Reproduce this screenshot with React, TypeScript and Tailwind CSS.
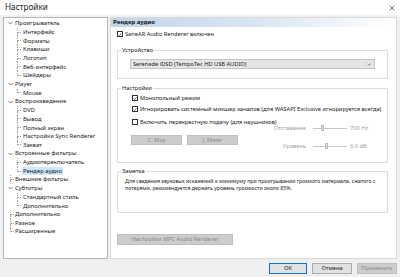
import type { ReactNode } from "react";

type Node = { label: string; children?: string[] };

const tree: Node[] = [
  { label: "Проигрыватель", children: ["Интерфейс", "Форматы", "Клавиши", "Логотип", "Веб-интерфейс", "Шейдеры"] },
  { label: "Player", children: ["Mouse"] },
  { label: "Воспроизведение", children: ["DVD", "Вывод", "Полный экран", "Настройки Sync Renderer", "Захват"] },
  { label: "Встроенные фильтры", children: ["Аудиопереключатель", "Рендер аудио"] },
  { label: "Внешние фильтры" },
  { label: "Субтитры", children: ["Стандартный стиль", "Дополнительно"] },
  { label: "Дополнительно" },
  { label: "Разное" },
  { label: "Расширенные" },
];

const font = { fontFamily: '"Noto Sans", "Open Sans", sans-serif' };

function Chevron() {
  return (
    <svg width="5" height="4" viewBox="0 0 5 4" className="shrink-0">
      <path d="M0.5 1 L2.5 3 L4.5 1" fill="none" stroke="#555" strokeWidth="0.8" />
    </svg>
  );
}

function Check({ checked }: { checked?: boolean }) {
  return (
    <span className="w-[6px] h-[6px] border border-[#333] bg-white flex items-center justify-center shrink-0">
      {checked && (
        <svg width="5" height="5" viewBox="0 0 5 5">
          <path d="M0.6 2.5 L2 3.9 L4.4 1" fill="none" stroke="#222" strokeWidth="0.8" />
        </svg>
      )}
    </span>
  );
}

function CheckRow({ checked, children, className = "" }: { checked?: boolean; children: ReactNode; className?: string }) {
  return (
    <div className={`h-[8px] flex items-center gap-[2px] ${className}`}>
      <Check checked={checked} />
      <span className="whitespace-nowrap">{children}</span>
    </div>
  );
}

function Group({ title, className = "", children }: { title: string; className?: string; children: ReactNode }) {
  return (
    <fieldset className={`border border-[#dcdcdc] rounded-[1px] w-[271px] ml-[6px] ${className}`}>
      <legend className="ml-[3px] px-[1px] h-[8px] leading-[8px]">{title}</legend>
      {children}
    </fieldset>
  );
}

function Slider({ label, value, pos }: { label: string; value: string; pos: number }) {
  return (
    <div className="h-[8px] flex items-center text-[#a0a0a0]">
      <span className="w-[36px] text-right whitespace-nowrap">{label}</span>
      <div className="relative w-[34px] h-[8px] ml-[7px] flex items-center">
        <div className="w-full h-[1px] bg-[#c8c8c8]" />
        <div className="absolute top-[1px] w-[3px] h-[6px] bg-[#dcdcdc] border border-[#bcbcbc]" style={{ left: pos }} />
      </div>
      <span className="ml-[3px] whitespace-nowrap">{value}</span>
    </div>
  );
}

export default function App() {
  return (
    <div className="w-[400px] h-[277px] bg-[#f0f0f0] flex flex-col overflow-hidden text-[5.7px] text-[#1a1a1a]" style={font}>
      {/* title bar */}
      <div className="h-[15px] bg-white flex items-center justify-between pl-[5px] pr-[5px] shrink-0">
        <span className="text-[8.2px] text-[#222]">Настройки</span>
        <svg width="6" height="6" viewBox="0 0 6 6">
          <path d="M0.5 0.5 L5.5 5.5 M5.5 0.5 L0.5 5.5" stroke="#333" strokeWidth="0.7" />
        </svg>
      </div>

      <div className="flex pl-[3px] pt-[2px] gap-[2px] h-[244px] shrink-0">
        {/* tree */}
        <div className="w-[105px] h-[242px] bg-white border border-[#b5b5b5] pt-[1px] text-[5.9px]">
          {tree.map((n, i) => {
            const lastRoot = i === tree.length - 1;
            return (
              <div key={i}>
                <div className="h-[8.7px] flex items-center">
                  {n.children ? (
                    <div className="w-[10px] pl-[3.5px] flex items-center">
                      <Chevron />
                    </div>
                  ) : (
                    <div className="w-[10px] h-full flex">
                      <div className="w-[6px]" />
                      <div className="flex flex-col w-[4px] h-full">
                        <div className="flex-1 border-l border-b border-dotted border-[#a0a0a0]" />
                        <div className={`flex-1 ${lastRoot ? "" : "border-l border-dotted border-[#a0a0a0]"}`} />
                      </div>
                    </div>
                  )}
                  <span className="ml-[1px] whitespace-nowrap">{n.label}</span>
                </div>
                {n.children?.map((c, j) => {
                  const last = j === n.children!.length - 1;
                  const sel = c === "Рендер аудио";
                  return (
                    <div key={j} className="h-[8.7px] flex items-center">
                      <div className="w-[13px]" />
                      <div className="flex flex-col w-[4px] h-full">
                        <div className="flex-1 border-l border-b border-dotted border-[#a0a0a0]" />
                        <div className={`flex-1 ${last ? "" : "border-l border-dotted border-[#a0a0a0]"}`} />
                      </div>
                      <span className={`ml-[1px] px-[1px] whitespace-nowrap leading-[8px] ${sel ? "bg-[#cce8ff]" : ""}`}>{c}</span>
                    </div>
                  );
                })}
              </div>
            );
          })}
        </div>

        {/* main panel */}
        <div className="w-[287px] h-[242px] bg-white border border-[#d9d9d9] flex flex-col">
          <div className="h-[9px] bg-gradient-to-r from-[#c2d5ea] via-[#d9e5f2] to-white flex items-center pl-[2px] font-bold text-[6px] text-[#111]">
            Рендер аудио
          </div>

          <CheckRow checked className="mt-[3px] ml-[6px]">SaneAR Audio Renderer включен</CheckRow>

          <Group title="Устройство" className="mt-[8px] h-[33px]">
            <div className="mt-[5px] ml-[12px] w-[245px] h-[10px] bg-[#e5e5e5] border border-[#c4c4c4] flex items-center justify-between pl-[2px] pr-[3px]">
              <span className="whitespace-nowrap">Serenade iDSD (TempoTec HD USB AUDIO)</span>
              <svg width="4" height="3" viewBox="0 0 4 3">
                <path d="M0.3 0.6 L2 2.3 L3.7 0.6" fill="none" stroke="#555" strokeWidth="0.6" />
              </svg>
            </div>
          </Group>

          <Group title="Настройки" className="mt-[5px] h-[79px]">
            <CheckRow checked className="mt-[2px] ml-[14px]">Монопольный режим</CheckRow>
            <CheckRow checked className="mt-[3px] ml-[14px]">
              Игнорировать системный микшер каналов (для WASAPI Exclusive игнорируется всегда)
            </CheckRow>
            <div className="flex mt-[5px]">
              <div className="w-[152px] flex flex-col">
                <CheckRow className="ml-[14px]">Включить перекрестную подачу (для наушников)</CheckRow>
                <div className="flex gap-[5px] ml-[13px] mt-[9px]">
                  <div className="w-[51px] h-[10px] bg-[#cccccc] border border-[#bfbfbf] flex items-center justify-center text-[#8a8a8a]">C. Moy</div>
                  <div className="w-[51px] h-[10px] bg-[#cccccc] border border-[#bfbfbf] flex items-center justify-center text-[#8a8a8a]">J. Meier</div>
                </div>
              </div>
              <div className="flex flex-col pt-[6px] gap-[10px]">
                <Slider label="Отставание" value="700 Hz" pos={8} />
                <Slider label="Уровень" value="6.0 dB" pos={12} />
              </div>
            </div>
          </Group>

          <Group title="Заметка" className="mt-[4px] h-[46px]">
            <p className="mt-[3px] ml-[7px] leading-[7.2px] text-[5.2px] whitespace-nowrap">
              Для сведения звуковых искажений к минимуму при проигрывании громкого материала, сжатого с
              <br />
              потерями, рекомендуется держать уровень громкости около 85%.
            </p>
          </Group>

          <div className="mt-[21px] ml-[6px] w-[116px] h-[11px] bg-[#cccccc] border border-[#bfbfbf] flex items-center justify-center text-[#8a8a8a]">
            Настройки MPC Audio Renderer
          </div>
        </div>
      </div>

      {/* bottom buttons */}
      <div className="flex-1 flex items-center justify-end pr-[3px] gap-[5px]">
        <div className="w-[38px] h-[11px] bg-[#e1e1e1] border border-[#0078d7] flex items-center justify-center">OK</div>
        <div className="w-[40px] h-[11px] bg-[#e1e1e1] border border-[#adadad] flex items-center justify-center">Отмена</div>
        <div className="w-[40px] h-[11px] bg-[#cccccc] border border-[#bfbfbf] flex items-center justify-center text-[#8a8a8a]">Применить</div>
      </div>
    </div>
  );
}
